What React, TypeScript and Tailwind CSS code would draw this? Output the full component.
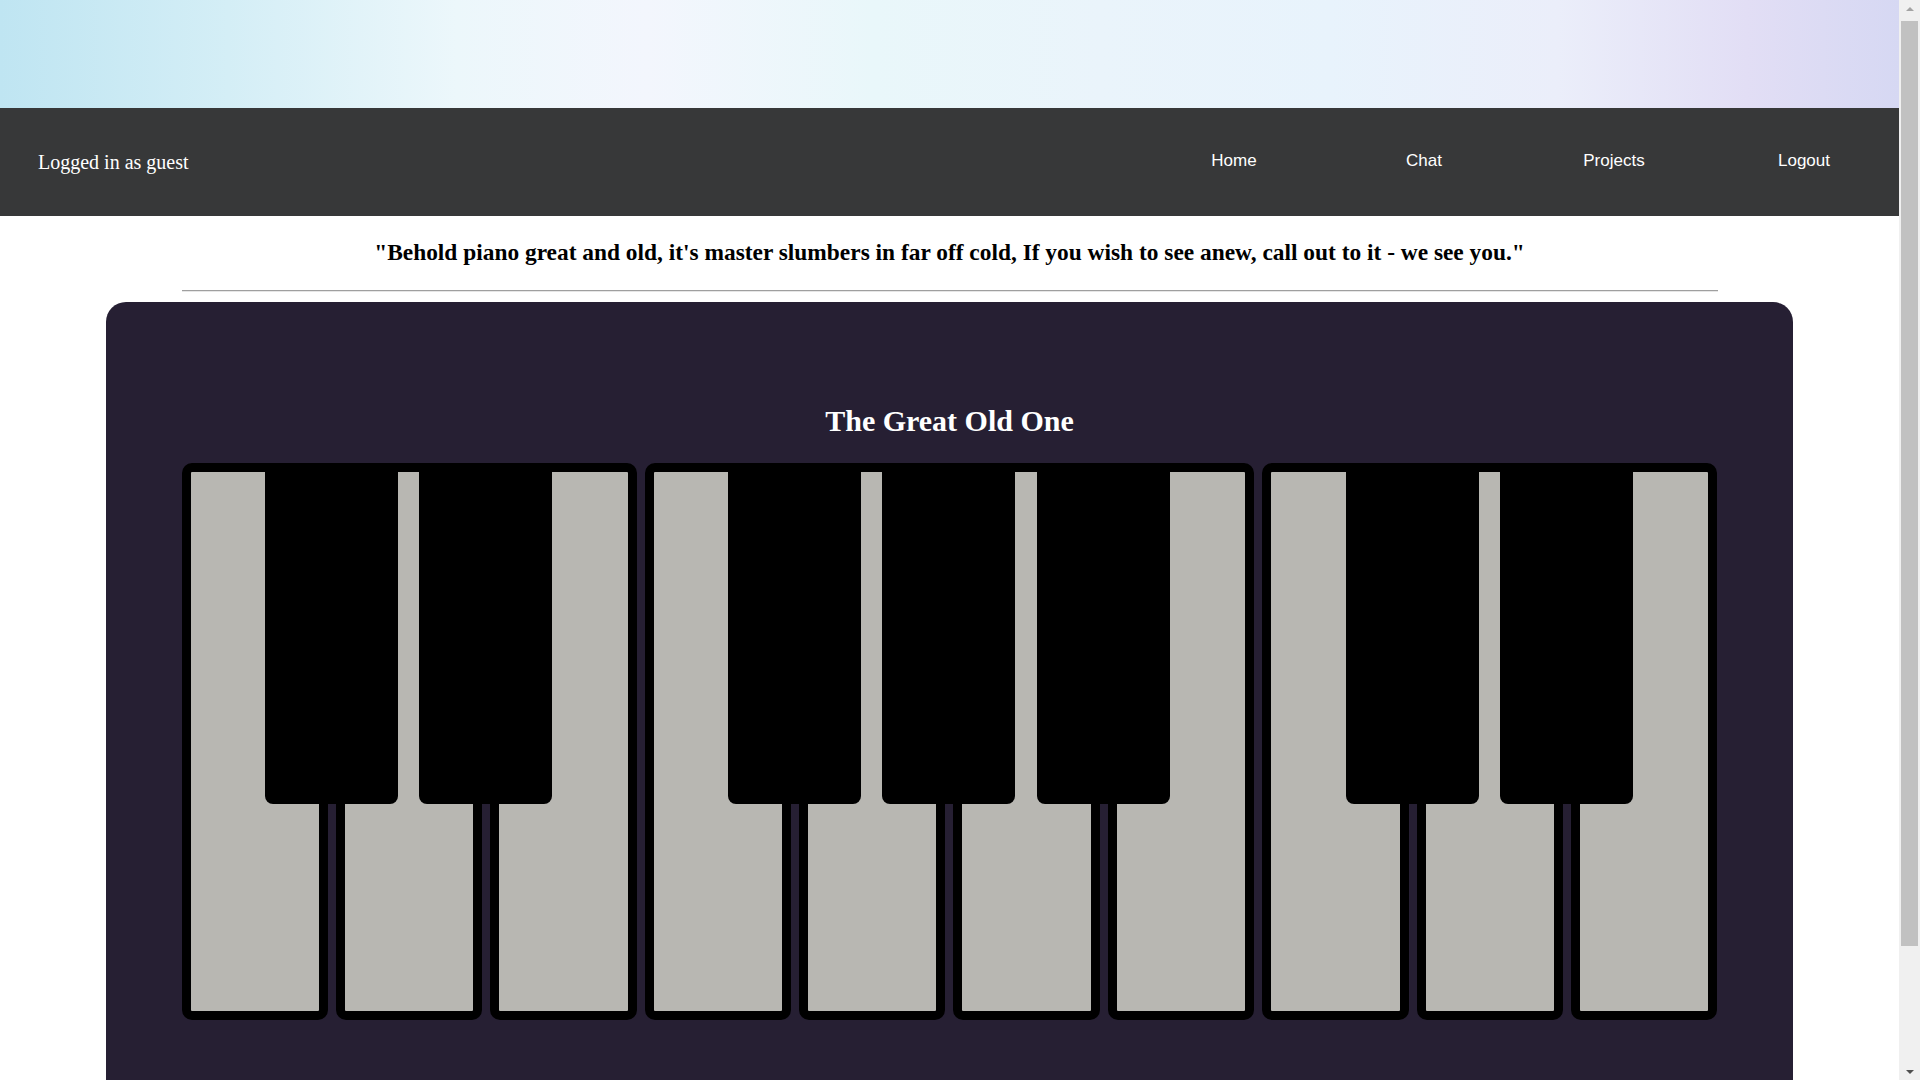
import React from "react";

const WHITE_KEYS = ["C", "D", "E", "F", "G", "A", "B", "C2", "D2", "E2"];
// a black key sits in the gap to the right of these white keys
const HAS_SHARP = new Set([0, 1, 3, 4, 5, 7, 8]);

function NavBar() {
  return (
    <nav className="h-[108px] bg-[#373839] flex items-center justify-between">
      <span className="pl-[38px] text-[20px] text-white font-['Liberation_Serif',serif]">
        Logged in as guest
      </span>
      <ul className="flex pb-[2px] font-['Liberation_Sans',Arial,sans-serif] text-[17px] text-white">
        {["Home", "Chat", "Projects", "Logout"].map((link) => (
          <li key={link} className="w-[190px] text-center">
            <a className="cursor-pointer">{link}</a>
          </li>
        ))}
      </ul>
    </nav>
  );
}

function Piano() {
  return (
    <div className="mx-auto w-[1536px] h-[557px] grid grid-cols-10 gap-x-[8px]">
      {WHITE_KEYS.map((note, i) => (
        <div key={note} className="relative">
          <div className="h-full bg-[#b8b7b2] border-[9px] border-black rounded-[10px]" />
          {HAS_SHARP.has(i) && (
            <div className="absolute top-0 -right-[70px] z-10 w-[133px] h-[341px] bg-black rounded-b-[8px]" />
          )}
        </div>
      ))}
    </div>
  );
}

// the window's scrollbar, as it shows in the picture
function Scrollbar() {
  return (
    <div className="fixed top-0 right-0 z-50 w-[21px] h-screen bg-[#f0f0f0] flex flex-col items-center">
      <div className="h-[17px] flex items-center justify-center">
        <div className="w-0 h-0 border-x-[4px] border-x-transparent border-b-[4px] border-b-[#a3a3a3]" />
      </div>
      <div className="w-[17px] h-[925px] bg-[#c1c1c1] mt-[4px]" />
      <div className="flex-1" />
      <div className="h-[17px] flex items-center justify-center">
        <div className="w-0 h-0 border-x-[4px] border-x-transparent border-t-[4px] border-t-[#505050]" />
      </div>
    </div>
  );
}

export default function App() {
  return (
    <div className="w-[1899px] min-h-screen bg-white font-['Liberation_Serif',serif]">
      {/* Banner */}
      <div className="h-[108px] bg-[linear-gradient(90deg,#bfe5f2_0%,#d4eef6_12%,#ecf7fb_24%,#f3f6fd_34%,#e9f7fa_46%,#eaf4fb_58%,#e8f3fc_70%,#ebeefa_82%,#e2def5_92%,#d6d8f3_100%)]" />

      <NavBar />

      {/* Quote */}
      <p className="mt-[23px] text-center text-[23.4px] font-bold text-black leading-[27px]">
        "Behold piano great and old, it's master slumbers in far off cold, If you wish to see anew, call out to it - we see you."
      </p>
      <div className="mt-[24px] ml-[182px] w-[1536px] border-t border-[#9f9f9f] border-b border-b-[#e6e6e6]" />

      {/* Piano card */}
      <div className="mt-[10px] mb-[16px] ml-[106px] w-[1687px] rounded-[20px] bg-[#261f33] pt-[101px] pb-[186px]">
        <h2 className="text-center text-[30px] font-bold text-white leading-[35px] mb-[25px]">
          The Great Old One
        </h2>
        <Piano />
      </div>

      <Scrollbar />
    </div>
  );
}
